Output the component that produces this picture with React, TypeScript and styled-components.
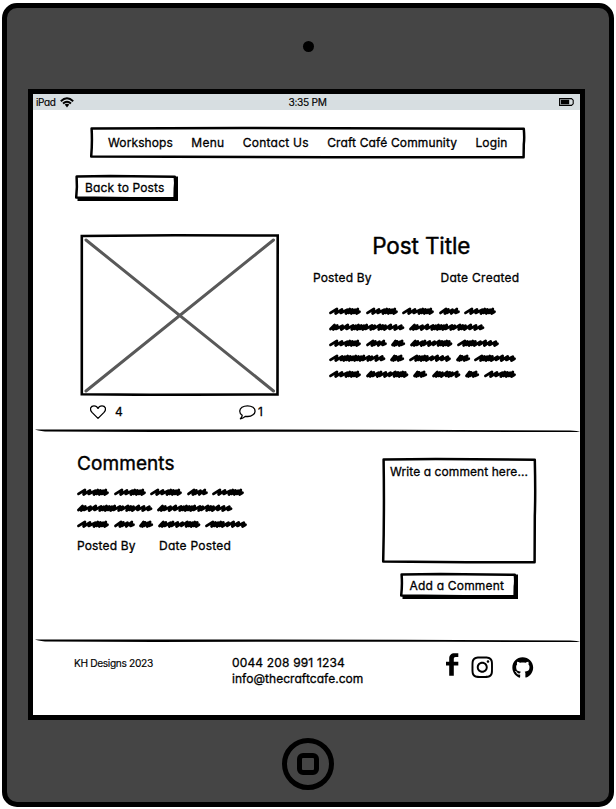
import React from 'react';
import styled, { createGlobalStyle } from 'styled-components';
import { FaGithub, FaInstagram } from 'react-icons/fa';

const GlobalStyle = createGlobalStyle`
  *, *::before, *::after { box-sizing: border-box; }
  body {
    margin: 0;
    background: #fff;
    color: #000;
    font-family: Inter, "Liberation Sans", sans-serif;
    font-feature-settings: "cv11";
  }
  svg { display: block; }
`;

/* ---------- device ---------- */

const Device = styled.div`
  display: flex;
  flex-direction: column;
  align-items: center;
  width: 612px;
  height: 804px;
  margin: 3px 2px 2px;
  border: 5px solid #000;
  border-radius: 15px;
  background: #454545;
  overflow: hidden;
`;

const CameraBar = styled.div`
  display: flex;
  justify-content: center;
  height: 81px;
  padding-top: 33px;
`;

const Camera = styled.div`
  width: 11px;
  height: 11px;
  border-radius: 50%;
  background: #000;
`;

const Screen = styled.div`
  display: flex;
  flex-direction: column;
  width: 557px;
  height: 631px;
  margin-right: 3px;
  border: 5px solid #000;
  background: #fff;
`;

const HomeBar = styled.div`
  display: flex;
  flex: 1;
  align-items: center;
  padding-top: 5px;
`;

const HomeButton = styled.div`
  display: grid;
  place-items: center;
  width: 52px;
  height: 52px;
  border: 5px solid #000;
  border-radius: 50%;
`;

const HomeSquare = styled.div`
  width: 22px;
  height: 22px;
  border: 5px solid #000;
  border-radius: 6px;
`;

/* ---------- shared parts ---------- */

const Label = styled.span<{ $size?: number; $track?: number; $stroke?: number }>`
  font-size: ${p => p.$size ?? 12}px;
  line-height: 16px;
  letter-spacing: ${p => p.$track ?? 0.15}px;
  -webkit-text-stroke: ${p => p.$stroke ?? 0.3}px #000;
  white-space: nowrap;
`;

const FrameBox = styled.div`
  position: relative;
`;

const FrameArt = styled.svg`
  position: absolute;
  inset: 0;
  overflow: visible;
  pointer-events: none;
`;

const FrameContent = styled.div`
  position: relative;
`;

function SketchFrame({ w, h, shadow, children }: { w: number; h: number; shadow?: boolean; children: React.ReactNode }) {
  return (
    <FrameBox>
      <FrameArt width={w} height={h}>
        {shadow && <path d={`M2.5 ${h - 3}H${w - 2}V1.5H${w + 2}V${h + 2}H2.5Z`} fill="#000" />}
        <path
          d={`M1.6 1.6 L${w * 0.35} 1 L${w - 1.2} 1.8 Q${w - 0.4} ${h * 0.35} ${w - 1.2} ${h * 0.55} L${w - 1.4} ${h - 0.8} L${w * 0.55} ${h - 0.7} Q${w * 0.2} ${h - 1.3} 1.2 ${h - 1.6} Q2.4 ${h * 0.5} 1.6 1.6Z`}
          fill="#fff"
          stroke="#000"
          strokeWidth="2.5"
          strokeLinejoin="round"
        />
      </FrameArt>
      <FrameContent>{children}</FrameContent>
    </FrameBox>
  );
}

const RuleArt = styled.svg`
  flex: none;
  margin-left: 2px;
`;

function SketchRule() {
  return (
    <RuleArt width="545" height="4" viewBox="0 0 545 4">
      <path d="M0 .4Q110 .6 230 .4L370 .7 535 1.4Q543 1.8 545 3L480 3.1 410 2.7 240 2.8 120 3.1 10 2.5Q2 1.5 0 .4Z" fill="#000" />
    </RuleArt>
  );
}

/* ---------- status bar and navigation ---------- */

const StatusBar = styled.div`
  display: grid;
  grid-template-columns: 1fr auto 1fr;
  flex: none;
  align-items: center;
  height: 16px;
  padding: 0 6px 0 3px;
  background: #d7dee1;
`;

const Carrier = styled.div`
  display: flex;
  align-items: center;
  gap: 4px;
  height: 14px;
`;

const Clock = styled.div`
  display: flex;
  padding-left: 5px;
`;

const BatterySlot = styled.div`
  display: flex;
  justify-content: flex-end;
`;

const NavSlot = styled.div`
  padding: 17px 0 0 57px;
`;

const Nav = styled.nav`
  display: flex;
  align-items: center;
  justify-content: space-between;
  width: 435px;
  height: 31px;
  padding: 0 17.5px 0 18px;
`;

const BackSlot = styled.div`
  padding: 17px 0 0 42px;
`;

const ButtonFace = styled.button<{ $w: number; $h: number; $pad: number }>`
  display: flex;
  align-items: center;
  width: ${p => p.$w}px;
  height: ${p => p.$h}px;
  padding: 0 0 0 ${p => p.$pad}px;
  border: 0;
  background: none;
  color: inherit;
  font: inherit;
  font-feature-settings: inherit;
`;

/* ---------- post ---------- */

const Post = styled.section`
  display: flex;
  height: 229px;
  padding: 34px 0 0 47px;
`;

const Media = styled.div`
  width: 199px;
`;

const Reactions = styled.div`
  display: flex;
  justify-content: space-between;
  height: 31px;
  padding: 6px 16px 0 10px;
`;

const Reaction = styled.div<{ $gap: number }>`
  display: flex;
  align-items: center;
  gap: ${p => p.$gap}px;
  height: 20px;
`;

const Details = styled.div`
  width: 206.5px;
  margin-left: 34px;
`;

const PostTitle = styled.h1`
  margin: 0 0 0 10px;
  font-size: 22.5px;
  font-weight: 400;
  line-height: 24px;
  letter-spacing: -0.1px;
  text-align: center;
  -webkit-text-stroke: 0.4px #000;
`;

const Meta = styled.div<{ $gap?: number; $top: number }>`
  display: flex;
  gap: ${p => p.$gap ?? 0}px;
  justify-content: ${p => (p.$gap ? 'flex-start' : 'space-between')};
  margin-top: ${p => p.$top}px;
`;

const PostBody = styled.div`
  padding: 17px 0 0 16px;
`;

/* ---------- scribbled copy ---------- */

const ScribbleLine = styled.div`
  display: flex;
  gap: 4.6px;
  align-items: center;
  height: 15.85px;
`;

const Scribble = styled.svg`
  flex: none;
  overflow: visible;
`;

/* Each word is a run of loose (l) and tight (t) pen strokes. */
const words: Record<string, { w: number; strokes: string }> = {
  a: { w: 32, strokes: 'llltttt' },
  b: { w: 75.5, strokes: 'ttllltttttltlttlll' },
  c: { w: 21, strokes: 'ltll' },
  d: { w: 14.3, strokes: 'ttlt' },
  e: { w: 42.5, strokes: 'ttltllltttt' },
  f: { w: 42, strokes: 'lttttllll' },
  g: { w: 56.5, strokes: 'llttttttttltll' },
  h: { w: 28.5, strokes: 'tttlttl' },
};

function scribblePath(w: number, strokes: string) {
  const steps = strokes.split('').map(s => (s === 'l' ? 5.4 : 2.8));
  const unit = (w - 6) / steps.reduce((a, b) => a + b, 0);
  let x = 1.5;
  let d = `M${x} 5.9`;
  steps.forEach((s, i) => {
    const next = x + s * unit;
    const top = 2 + (i % 3) * 0.35;
    const low = 5.9 + ((i + 1) % 2) * 0.6;
    d += `L${(next + 1.3).toFixed(1)} ${top.toFixed(1)}L${next.toFixed(1)} ${low.toFixed(1)}`;
    x = next;
  });
  return `${d}L${(w - 1.5).toFixed(1)} 4.7`;
}

function ScribbleText({ lines }: { lines: string[] }) {
  return (
    <>
      {lines.map((line, i) => (
        <ScribbleLine key={i}>
          {line.split('').map((k, j) => (
            <Scribble key={j} width={words[k].w} height="8">
              <path d={scribblePath(words[k].w, words[k].strokes)} fill="none" stroke="#000" strokeWidth="2.8" strokeLinecap="round" strokeLinejoin="round" />
            </Scribble>
          ))}
        </ScribbleLine>
      ))}
    </>
  );
}

/* ---------- comments ---------- */

const Comments = styled.section`
  display: flex;
  justify-content: space-between;
  height: 206px;
  padding: 21px 44px 0 44px;
`;

const CommentsTitle = styled.h2`
  margin: 0 0 10px;
  font-size: 19px;
  font-weight: 400;
  line-height: 20px;
  letter-spacing: 0.08px;
  -webkit-text-stroke: 0.4px #000;
`;

const CommentForm = styled.div`
  display: flex;
  flex-direction: column;
  gap: 10px;
  padding-top: 4px;
`;

const CommentInput = styled.div`
  display: flex;
  align-items: flex-start;
  width: 154px;
  height: 105px;
  padding: 6px 0 0 8px;
`;

const AddSlot = styled.div`
  padding-left: 18px;
`;

/* ---------- footer ---------- */

const Footer = styled.footer`
  display: grid;
  grid-template-columns: 158px 214px 1fr;
  flex: 1;
  padding: 12px 0 0 41px;
`;

const Copyright = styled.div`
  display: flex;
  align-items: flex-start;
`;

const Contact = styled.div`
  display: flex;
  flex-direction: column;
`;

const Social = styled.div`
  display: flex;
  align-items: flex-start;
`;

const SocialIcon = styled.div<{ $left?: number; $top?: number }>`
  margin: ${p => p.$top ?? 0}px 0 0 ${p => p.$left ?? 0}px;
`;

const menu = [
  { text: 'Workshops', track: 0.11 },
  { text: 'Menu', track: 0.25 },
  { text: 'Contact Us', track: 0.24 },
  { text: 'Craft Café Community', track: 0.13 },
  { text: 'Login', track: 0.14 },
];

export default function App() {
  return (
    <>
      <GlobalStyle />
      <Device>
        <CameraBar>
          <Camera />
        </CameraBar>
        <Screen>
          <StatusBar>
            <Carrier>
              <Label $size={10} $track={-0.35} $stroke={0.15}>iPad</Label>
              <svg width="14" height="11" viewBox="0 0 14 11" fill="none" stroke="#000" strokeWidth="1.9">
                <path d="M.8 4.2Q7-1.6 13.2 4.2M3 6.5Q7 2.8 11 6.5" />
                <path d="M4.7 7.5Q7 5.8 9.3 7.5L7 10.4Z" fill="#000" stroke="none" />
              </svg>
            </Carrier>
            <Clock>
              <Label $size={10.2} $track={-0.3} $stroke={0.15}>3:35 PM</Label>
            </Clock>
            <BatterySlot>
              <svg width="15" height="8" viewBox="0 0 15 8">
                <path d="M.6.6H12.5L14.2 2.2V5.8L12.5 7.4H.6Z" fill="#d7dee1" stroke="#000" strokeWidth="1.1" />
                <path d="M1.8 1.8H10.2V6.2H1.8Z" fill="#000" />
              </svg>
            </BatterySlot>
          </StatusBar>

          <NavSlot>
            <SketchFrame w={435} h={31}>
              <Nav>
                {menu.map(m => <Label key={m.text} $track={m.track}>{m.text}</Label>)}
              </Nav>
            </SketchFrame>
          </NavSlot>

          <BackSlot>
            <SketchFrame w={101} h={24} shadow>
              <ButtonFace $w={101} $h={25} $pad={10}>
                <Label $track={0.14}>Back to Posts</Label>
              </ButtonFace>
            </SketchFrame>
          </BackSlot>

          <Post>
            <Media>
              <svg width="199" height="162" viewBox="0 0 199 162" fill="none">
                <path d="M1.8 2L95 1.3 197.7 1.5 197.5 160.5 70 160.8 1.8 160.3Z" stroke="#000" strokeWidth="2.6" />
                <path d="M6 6L193.5 157M193.5 6L6 157" stroke="#595959" strokeWidth="3" strokeLinecap="round" />
              </svg>
              <Reactions>
                <Reaction $gap={9}>
                  <svg width="16" height="15" viewBox="0 0 16 15" fill="none" stroke="#000" strokeWidth="1.3" strokeLinejoin="round">
                    <path d="M8 13.4L2 7.4C-1 4 1 .8 4 .8 6 .8 7.3 1.8 8 3.4 8.7 1.8 10 .8 12 .8 15 .8 17 4 14 7.4Z" />
                  </svg>
                  <Label>4</Label>
                </Reaction>
                <Reaction $gap={2}>
                  <svg width="17" height="15" viewBox="0 0 17 15" fill="none" stroke="#000" strokeWidth="1.3" strokeLinejoin="round">
                    <path d="M3.2 10.2C-.3 8 .2 4.2 3 2.3 6 .3 11 .3 14 2.3 17 4.5 16.5 8 14 9.8 11.8 11.5 8.8 11.7 6.5 11.3 5 12.6 3.3 13.6 1.4 13.8 2.6 12.6 3.2 11.6 3.2 10.2Z" />
                  </svg>
                  <Label>1</Label>
                </Reaction>
              </Reactions>
            </Media>
            <Details>
              <PostTitle>Post Title</PostTitle>
              <Meta $top={12}>
                <Label $track={0.15}>Posted By</Label>
                <Label $track={0.27}>Date Created</Label>
              </Meta>
              <PostBody>
                <ScribbleText lines={['aaaca', 'bb', 'acdef', 'gdfdf', 'aedhda']} />
              </PostBody>
            </Details>
          </Post>

          <SketchRule />

          <Comments>
            <div>
              <CommentsTitle>Comments</CommentsTitle>
              <ScribbleText lines={['aaaca', 'bb', 'acdef']} />
              <Meta $top={6} $gap={23.5}>
                <Label $track={0.15}>Posted By</Label>
                <Label $track={0.23}>Date Posted</Label>
              </Meta>
            </div>
            <CommentForm>
              <SketchFrame w={154} h={105}>
                <CommentInput>
                  <Label $track={0.08}>Write a comment here...</Label>
                </CommentInput>
              </SketchFrame>
              <AddSlot>
                <SketchFrame w={116} h={24} shadow>
                  <ButtonFace $w={116} $h={25} $pad={9.5}>
                    <Label $track={0.2}>Add a Comment</Label>
                  </ButtonFace>
                </SketchFrame>
              </AddSlot>
            </CommentForm>
          </Comments>

          <SketchRule />

          <Footer>
            <Copyright>
              <Label $size={10.2} $track={-0.35} $stroke={0.15}>KH Designs 2023</Label>
            </Copyright>
            <Contact>
              <Label $track={0.16}>0044 208 991 1234</Label>
              <Label $track={0.04}>info@thecraftcafe.com</Label>
            </Contact>
            <Social>
              <SocialIcon $top={-2}>
                <svg width="13" height="23" viewBox="0 0 13 23">
                  <path d="M3.2 22.7V12.6H0V8.8H3.2V5.8C3.2 2 5.2.2 8.4.2H12.3V4H9.7C8.3 4 7.8 4.7 7.8 6V8.8H12.3V12.6H7.8V22.7Z" fill="#000" />
                </svg>
              </SocialIcon>
              <SocialIcon $left={11} $top={0}><FaInstagram size={24.5} /></SocialIcon>
              <SocialIcon $left={17.5} $top={1.5}><FaGithub size={21.5} /></SocialIcon>
            </Social>
          </Footer>
        </Screen>
        <HomeBar>
          <HomeButton>
            <HomeSquare />
          </HomeButton>
        </HomeBar>
      </Device>
    </>
  );
}
